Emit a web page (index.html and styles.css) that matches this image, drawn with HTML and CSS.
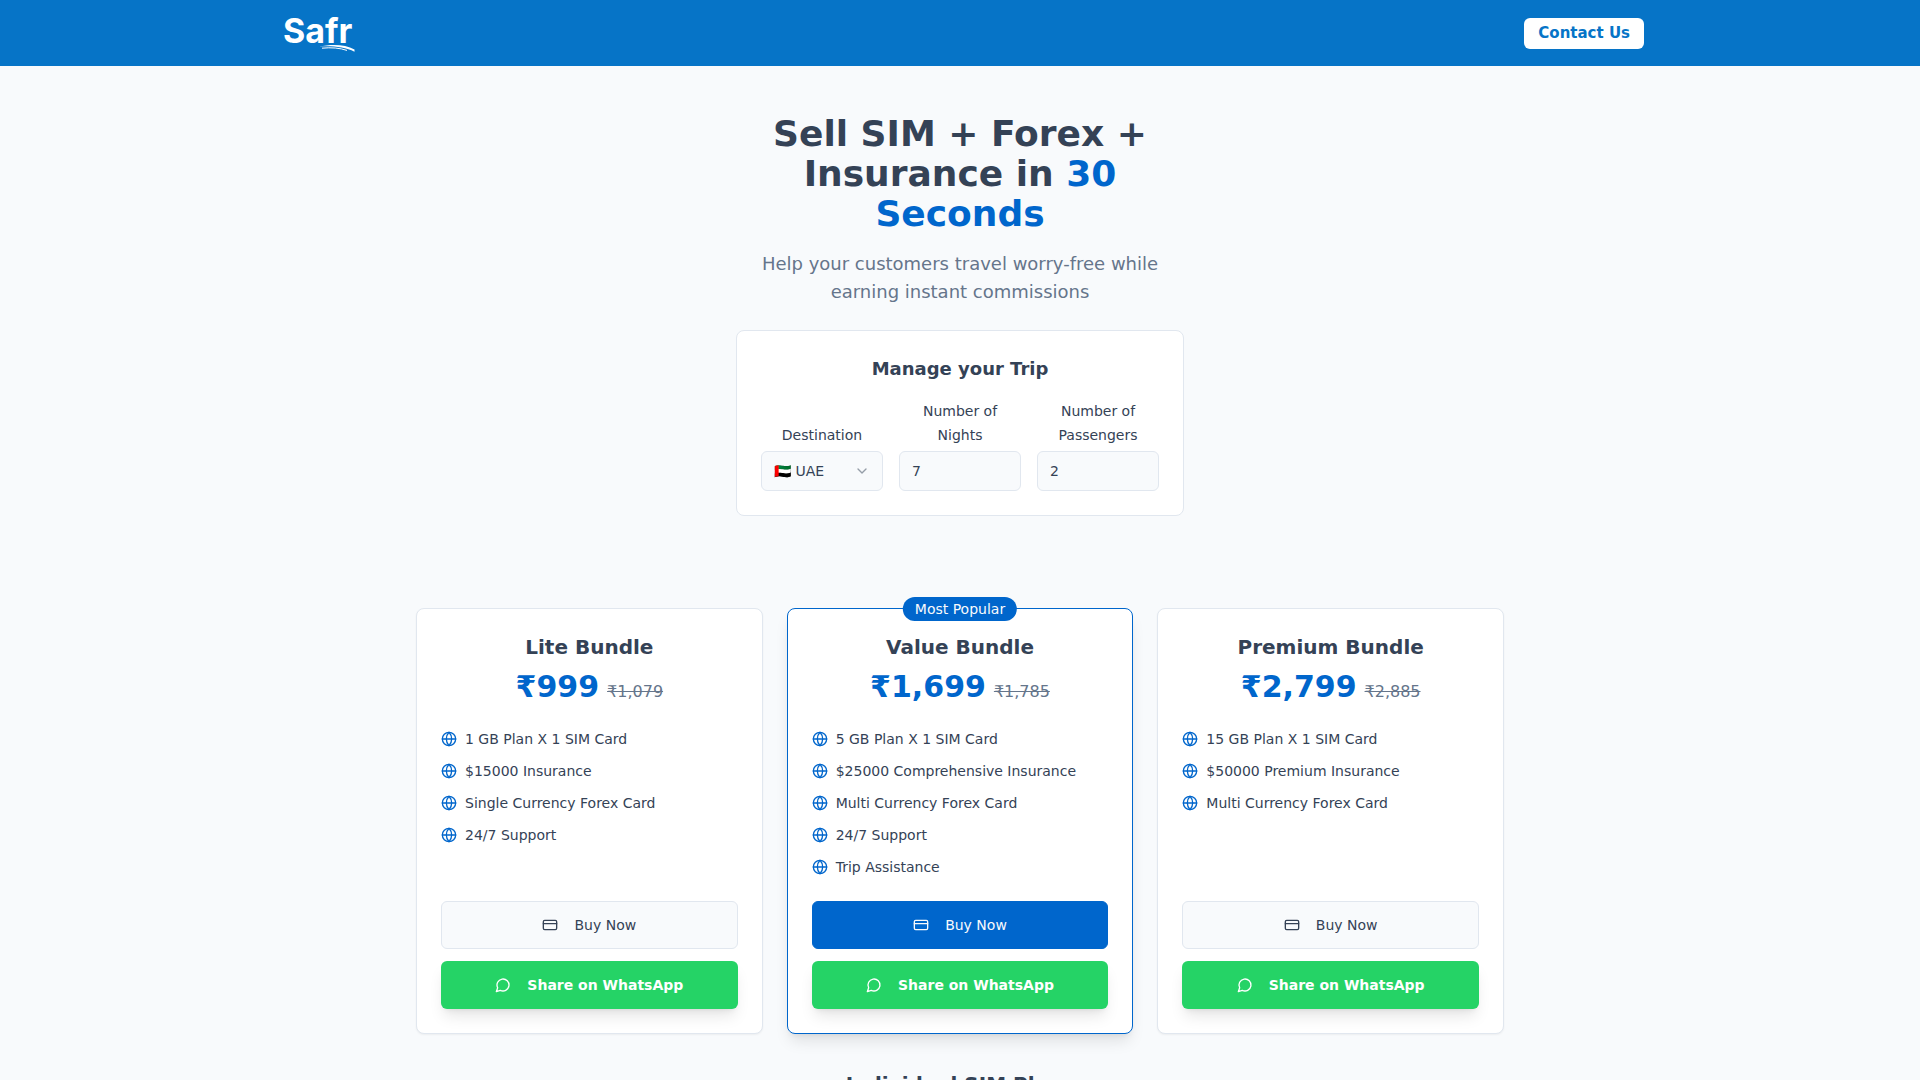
FILE: index.html
```html
<!DOCTYPE html>
<html lang="en">
<head>
<meta charset="utf-8">
<meta name="viewport" content="width=device-width, initial-scale=1">
<title>Safr</title>
<link rel="stylesheet" href="styles.css">
</head>
<body>
<svg class="sprite" aria-hidden="true">
  <symbol id="globe" viewBox="0 0 24 24"><circle cx="12" cy="12" r="10"/><path d="M12 2a14.5 14.5 0 0 0 0 20 14.5 14.5 0 0 0 0-20"/><path d="M2 12h20"/></symbol>
  <symbol id="card" viewBox="0 0 24 24"><rect width="20" height="14" x="2" y="5" rx="2"/><path d="M2 10h20"/></symbol>
  <symbol id="message" viewBox="0 0 24 24"><path d="M7.9 20A9 9 0 1 0 4 16.1L2 22Z"/></symbol>
  <symbol id="chevron" viewBox="0 0 24 24"><path d="m6 9 6 6 6-6"/></symbol>
</svg>

<header class="topbar">
  <div class="topbar-inner">
    <a class="logo" href="#" aria-label="Safr home">
      <svg width="76" height="40" viewBox="-2 0 76 40">
        <text class="logo-text" x="-1" y="30">Safr</text>
        <path class="logo-swoosh" d="M35 33.6C47 31 61 31 70.500 36.400L70.500 38.800C61 34 48 32.700 35 33.600Z"/>
        <path class="logo-line" d="M38 35.200C47 34.200 56 35 63 37.400"/>
      </svg>
    </a>
    <button class="contact" type="button">Contact Us</button>
  </div>
</header>

<main>
  <section class="hero">
    <h1>Sell SIM + Forex + Insurance in <span class="accent">30 Seconds</span></h1>
    <p class="lead">Help your customers travel worry-free while earning instant commissions</p>
    <form class="trip">
      <h2>Manage your Trip</h2>
      <div class="fields">
        <div class="field">
          <label for="destination">Destination</label>
          <div class="select">
            <select id="destination"><option>🇦🇪 UAE</option></select>
            <svg class="icon chevron" aria-hidden="true"><use href="#chevron"/></svg>
          </div>
        </div>
        <div class="field">
          <label for="nights">Number of Nights</label>
          <input id="nights" type="text" inputmode="numeric" value="7">
        </div>
        <div class="field">
          <label for="passengers">Number of Passengers</label>
          <input id="passengers" type="text" inputmode="numeric" value="2">
        </div>
      </div>
    </form>
  </section>

  <section class="bundles">
    <article class="bundle">
      <h3>Lite Bundle</h3>
      <p class="price"><strong>₹999</strong><s>₹1,079</s></p>
      <ul>
        <li><svg class="icon"><use href="#globe"/></svg>1 GB Plan X 1 SIM Card</li>
        <li><svg class="icon"><use href="#globe"/></svg>$15000 Insurance</li>
        <li><svg class="icon"><use href="#globe"/></svg>Single Currency Forex Card</li>
        <li><svg class="icon"><use href="#globe"/></svg>24/7 Support</li>
      </ul>
      <div class="actions">
        <button class="btn buy" type="button"><svg class="icon"><use href="#card"/></svg>Buy Now</button>
        <button class="btn share" type="button"><svg class="icon"><use href="#message"/></svg>Share on WhatsApp</button>
      </div>
    </article>
    <article class="bundle popular">
      <span class="badge">Most Popular</span>
      <h3>Value Bundle</h3>
      <p class="price"><strong>₹1,699</strong><s>₹1,785</s></p>
      <ul>
        <li><svg class="icon"><use href="#globe"/></svg>5 GB Plan X 1 SIM Card</li>
        <li><svg class="icon"><use href="#globe"/></svg>$25000 Comprehensive Insurance</li>
        <li><svg class="icon"><use href="#globe"/></svg>Multi Currency Forex Card</li>
        <li><svg class="icon"><use href="#globe"/></svg>24/7 Support</li>
        <li><svg class="icon"><use href="#globe"/></svg>Trip Assistance</li>
      </ul>
      <div class="actions">
        <button class="btn buy primary" type="button"><svg class="icon"><use href="#card"/></svg>Buy Now</button>
        <button class="btn share" type="button"><svg class="icon"><use href="#message"/></svg>Share on WhatsApp</button>
      </div>
    </article>
    <article class="bundle">
      <h3>Premium Bundle</h3>
      <p class="price"><strong>₹2,799</strong><s>₹2,885</s></p>
      <ul>
        <li><svg class="icon"><use href="#globe"/></svg>15 GB Plan X 1 SIM Card</li>
        <li><svg class="icon"><use href="#globe"/></svg>$50000 Premium Insurance</li>
        <li><svg class="icon"><use href="#globe"/></svg>Multi Currency Forex Card</li>
      </ul>
      <div class="actions">
        <button class="btn buy" type="button"><svg class="icon"><use href="#card"/></svg>Buy Now</button>
        <button class="btn share" type="button"><svg class="icon"><use href="#message"/></svg>Share on WhatsApp</button>
      </div>
    </article>
  </section>

  <section class="plans">
    <h2>Individual SIM Plans</h2>
  </section>
</main>
</body>
</html>
```
FILE: styles.css
```css
:root {
  --ink: #344256;
  --muted: #65758b;
  --line: #e1e7ef;
  --page: #f8fafc;
  --brand: #0066cc;
  --bar: #0674c7;
  --shadow-sm: 0 1px 2px rgba(0, 0, 0, 0.05);
  --shadow-lg: 0 10px 15px -3px rgba(0, 0, 0, 0.1), 0 4px 6px -4px rgba(0, 0, 0, 0.1);
}

*, *::before, *::after { box-sizing: border-box; }

body {
  margin: 0;
  background: var(--page);
  color: var(--ink);
  font: 16px/24px "DejaVu Sans", sans-serif;
}

h1, h2, h3, p, ul { margin: 0; padding: 0; }
ul { list-style: none; }
button, input, select { font: inherit; color: inherit; }
button { cursor: pointer; }

.sprite { display: none; }

.icon {
  flex: none;
  width: 16px;
  height: 16px;
  fill: none;
  stroke: currentColor;
  stroke-width: 2;
  stroke-linecap: round;
  stroke-linejoin: round;
}

.topbar { background: var(--bar); }

.topbar-inner {
  display: flex;
  align-items: center;
  justify-content: space-between;
  max-width: 1392px;
  margin: 0 auto;
  padding: 13px 12px 13px 18px;
}

.logo svg { display: block; }
.logo-text { fill: #fff; font: 700 34px Inter, sans-serif; }
.logo-swoosh { fill: #fff; }
.logo-line { fill: none; stroke: #fff; stroke-width: 1; }

.contact {
  padding: 4px 14px;
  border: 0;
  border-radius: 6px;
  background: #fff;
  color: var(--bar);
  font-size: 15px;
  font-weight: 700;
  line-height: 23px;
}

.hero {
  max-width: 448px;
  margin: 0 auto;
  padding: 48px 0;
  text-align: center;
}

h1 { font-size: 36px; line-height: 40px; }
.accent { color: var(--brand); }

.lead {
  margin: 16px 0 24px;
  color: var(--muted);
  font-size: 18px;
  line-height: 28px;
}

.trip {
  padding: 24px;
  border: 1px solid var(--line);
  border-radius: 8px;
  background: #fff;
}

.trip h2 { margin-bottom: 16px; font-size: 18px; line-height: 28px; }

.fields {
  display: grid;
  grid-template-columns: repeat(3, minmax(0, 1fr));
  gap: 16px;
  align-items: end;
  font-size: 14px;
}

.field { display: grid; gap: 4px; }
.select { position: relative; }

.field input,
.field select {
  display: block;
  width: 100%;
  height: 40px;
  padding: 0 12px;
  border: 1px solid var(--line);
  border-radius: 6px;
  background: var(--page);
  appearance: none;
}

.chevron {
  position: absolute;
  top: 12px;
  right: 13px;
  opacity: 0.5;
  pointer-events: none;
}

.bundles {
  display: grid;
  grid-template-columns: repeat(3, minmax(0, 1fr));
  gap: 24px;
  max-width: 1152px;
  margin: 0 auto;
  padding: 44px 32px 0;
}

.bundle {
  position: relative;
  display: flex;
  flex-direction: column;
  padding: 24px;
  border: 1px solid var(--line);
  border-radius: 8px;
  background: #fff;
  box-shadow: var(--shadow-sm);
}

.popular { border-color: var(--brand); box-shadow: var(--shadow-lg); }

.badge {
  position: absolute;
  top: -12px;
  left: 50%;
  padding: 0 12px;
  border-radius: 12px;
  background: var(--brand);
  color: var(--page);
  font-size: 14px;
  white-space: nowrap;
  transform: translateX(-50%);
}

.bundle h3 { font-size: 20px; line-height: 28px; text-align: center; }

.price {
  display: flex;
  align-items: baseline;
  justify-content: center;
  gap: 8px;
  margin: 8px 0 24px;
}

.price strong { color: var(--brand); font-size: 30px; line-height: 36px; }
.price s { color: var(--muted); }

.bundle ul { display: grid; gap: 12px; font-size: 14px; line-height: 20px; }
.bundle li { display: flex; align-items: center; gap: 8px; }
.bundle li .icon { color: var(--brand); }

.actions { display: grid; gap: 12px; margin-top: auto; padding-top: 24px; }

.btn {
  display: flex;
  align-items: center;
  justify-content: center;
  gap: 16px;
  height: 48px;
  border: 0;
  border-radius: 6px;
  font-size: 14px;
}

.buy { border: 1px solid var(--line); background: var(--page); }
.primary { border-color: var(--brand); background: var(--brand); color: var(--page); }

.share {
  background: #25d366;
  color: #fff;
  font-weight: 700;
  box-shadow: var(--shadow-lg);
}

.plans { padding: 36px 16px 48px; text-align: center; }
.plans h2 { font-size: 20px; line-height: 28px; }

@media (max-width: 900px) {
  .bundles { grid-template-columns: minmax(0, 1fr); }
}
```
